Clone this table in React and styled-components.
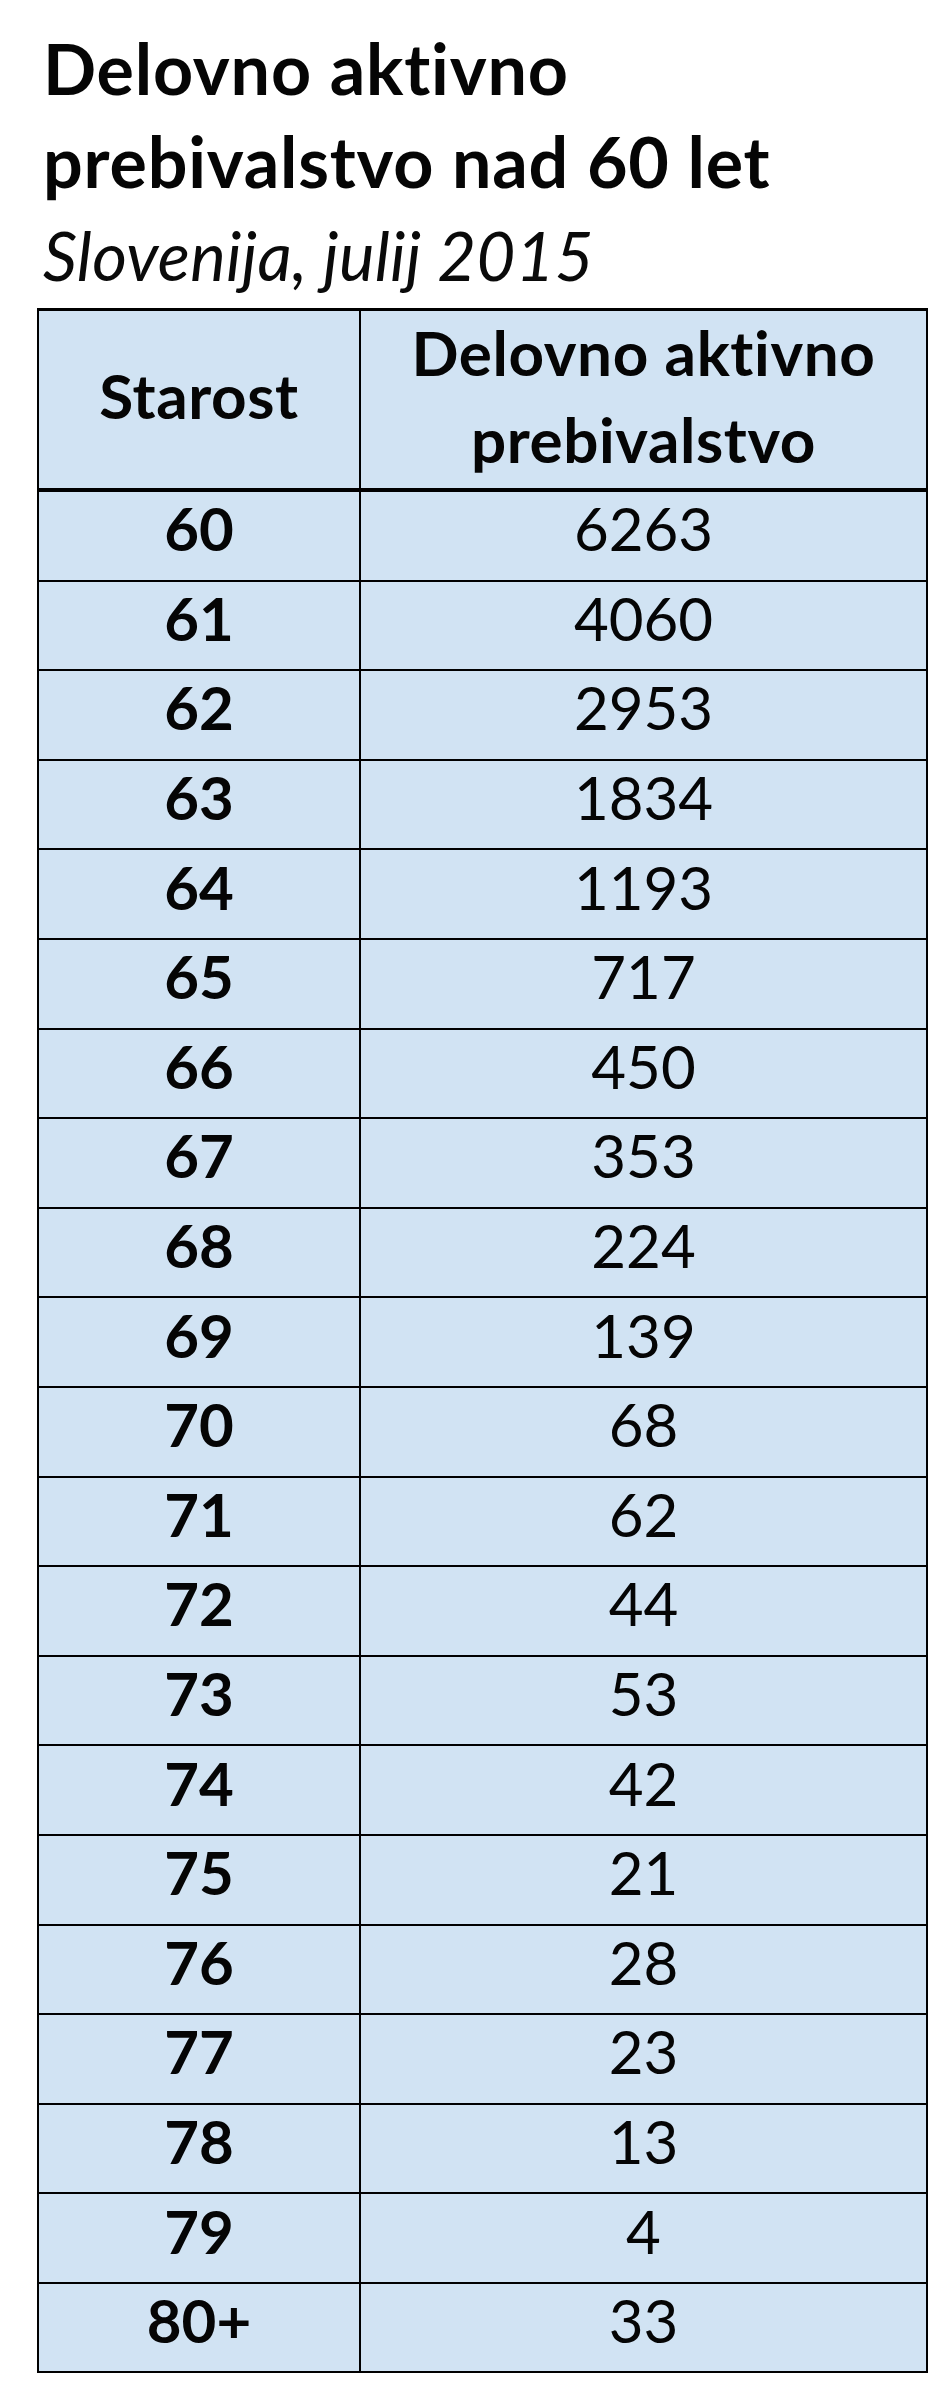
import React from "react";
import styled, { createGlobalStyle } from "styled-components";

const Global = createGlobalStyle`
  html, body {
    margin: 0;
    padding: 0;
    background: #ffffff;
  }
  body {
    font-family: Lato, "Open Sans", "Liberation Sans", sans-serif;
    color: #000;
  }
`;

const Page = styled.div`
  width: 940px;
  min-height: 2394px;
  padding-top: 22px;
  box-sizing: border-box;
`;

const Heading = styled.header`
  padding-left: 43px;
  margin-bottom: 6px;
`;

const Title = styled.h1`
  margin: 0;
  font-size: 70px;
  font-weight: 700;
  letter-spacing: 0.8px;
  line-height: 93px;
  color: #050505;
`;

const Subtitle = styled.p`
  margin: 0;
  font-size: 67px;
  font-style: italic;
  font-weight: 400;
  letter-spacing: 0.3px;
  line-height: 94px;
  color: #0a0a0a;
`;

const Table = styled.div`
  margin-left: 37px;
  width: 891px;
  box-sizing: border-box;
  display: grid;
  grid-template-columns: 322px 567px;
  border-top: 3px solid #000;
  border-left: 2px solid #000;
`;

const Cell = styled.div`
  box-sizing: border-box;
  height: ${(p) => (p.$head ? "181px" : "89.6px")};
  background: #d1e3f3;
  border-right: 2px solid #000;
  border-bottom: ${(p) => (p.$head ? "4px" : "2px")} solid #000;
  display: flex;
  align-items: center;
  justify-content: center;
  text-align: center;
  font-size: ${(p) => (p.$head ? "62px" : "60px")};
  letter-spacing: ${(p) => (p.$head ? "0.6px" : "0")};
  font-weight: ${(p) => (p.$bold ? 700 : 400)};
  line-height: ${(p) => (p.$head ? "87px" : "72px")};
  padding-bottom: ${(p) => (p.$head ? "8px" : "15px")};
  color: #050505;
`;

const rows = [
  ["60", "6263"],
  ["61", "4060"],
  ["62", "2953"],
  ["63", "1834"],
  ["64", "1193"],
  ["65", "717"],
  ["66", "450"],
  ["67", "353"],
  ["68", "224"],
  ["69", "139"],
  ["70", "68"],
  ["71", "62"],
  ["72", "44"],
  ["73", "53"],
  ["74", "42"],
  ["75", "21"],
  ["76", "28"],
  ["77", "23"],
  ["78", "13"],
  ["79", "4"],
  ["80+", "33"],
];

export default function App() {
  return (
    <Page>
      <Global />
      <Heading>
        <Title>
          Delovno aktivno
          <br />
          prebivalstvo nad 60 let
        </Title>
        <Subtitle>Slovenija, julij 2015</Subtitle>
      </Heading>
      <Table role="table">
        <Cell $head $bold role="columnheader">
          Starost
        </Cell>
        <Cell $head $bold role="columnheader">
          Delovno aktivno
          <br />
          prebivalstvo
        </Cell>
        {rows.map(([age, value]) => (
          <React.Fragment key={age}>
            <Cell $bold role="cell">
              {age}
            </Cell>
            <Cell role="cell">{value}</Cell>
          </React.Fragment>
        ))}
      </Table>
    </Page>
  );
}
